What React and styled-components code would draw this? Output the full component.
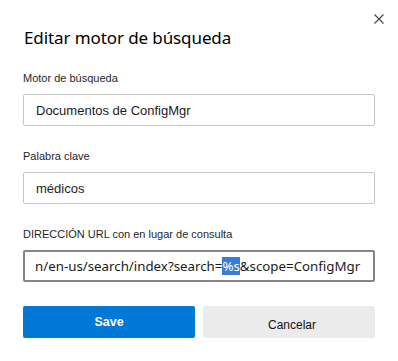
import styled, { createGlobalStyle } from 'styled-components';

const Global = createGlobalStyle`
  html, body {
    margin: 0;
    padding: 0;
    background: #fff;
  }
  body {
    font-family: 'Liberation Sans', Arial, sans-serif;
    color: #1b1b1b;
  }
`;

const Dialog = styled.div`
  position: relative;
  width: 398px;
  height: 361px;
  box-sizing: border-box;
  padding: 26px 23px 0 23px;
  display: flex;
  flex-direction: column;
  background: #fff;
`;

const Close = styled.button`
  position: absolute;
  top: 13px;
  right: 14px;
  width: 11px;
  height: 11px;
  padding: 0;
  border: 0;
  background: transparent;
  display: flex;
  align-items: center;
  justify-content: center;
  cursor: pointer;
`;

const Title = styled.h1`
  margin: 0 0 20px 1px;
  font-family: 'Noto Sans', 'Open Sans', sans-serif;
  font-weight: 400;
  font-size: 17px;
  line-height: 24px;
  color: #000;
  letter-spacing: -0.1px;
`;

const Field = styled.div`
  display: flex;
  flex-direction: column;
  margin-bottom: 22px;
`;

const Label = styled.label`
  font-size: 11px;
  line-height: 16px;
  color: #1f1f1f;
  margin-bottom: 8px;
`;

const Input = styled.div`
  box-sizing: border-box;
  height: 32px;
  display: flex;
  align-items: center;
  overflow: hidden;
  white-space: nowrap;
  border: ${(p) => (p.$focused ? '2px solid #858585' : '1px solid #c6c6c6')};
  border-radius: 2px;
  padding: ${(p) => (p.$focused ? '0 11px 1px 10px' : '1px 12px 0 12px')};
  font-family: ${(p) =>
    p.$focused ? "'Noto Sans', 'Open Sans', sans-serif" : "'Liberation Sans', Arial, sans-serif"};
  font-size: ${(p) => (p.$focused ? '13.3px' : '13px')};
  color: #1b1b1b;
`;

const Selected = styled.span`
  background: #3a7cd6;
  color: #fff;
  line-height: 18px;
  display: inline-block;
`;

const Actions = styled.div`
  display: grid;
  grid-template-columns: 1fr 1fr;
  gap: 8px;
  margin-top: 2px;
`;

const Button = styled.button`
  height: 32px;
  border: 0;
  border-radius: 2px;
  cursor: pointer;
  background: ${(p) => (p.$primary ? '#0078d4' : '#ebebeb')};
  color: ${(p) => (p.$primary ? '#fff' : '#111')};
  font-family: 'Liberation Sans', Arial, sans-serif;
  font-weight: ${(p) => (p.$primary ? 700 : 400)};
  font-size: ${(p) => (p.$primary ? '12.5px' : '12px')};
  padding: ${(p) => (p.$primary ? '0' : '5px 0 0 6px')};
`;

const CloseIcon = () => (
  <svg width="10" height="10" viewBox="0 0 10 10">
    <path d="M0.5 0.5 L9.5 9.5 M9.5 0.5 L0.5 9.5" stroke="#444" strokeWidth="1.1" fill="none" />
  </svg>
);

export default function App() {
  return (
    <>
      <Global />
      <Dialog>
        <Close aria-label="Cerrar">
          <CloseIcon />
        </Close>
        <Title>Editar motor de búsqueda</Title>
        <Field>
          <Label>Motor de búsqueda</Label>
          <Input>Documentos de ConfigMgr</Input>
        </Field>
        <Field>
          <Label>Palabra clave</Label>
          <Input>médicos</Input>
        </Field>
        <Field>
          <Label>DIRECCIÓN URL con en lugar de consulta</Label>
          <Input $focused>
            n/en-us/search/index?search=<Selected>%s</Selected>&amp;scope=ConfigMgr
          </Input>
        </Field>
        <Actions>
          <Button $primary>Save</Button>
          <Button>Cancelar</Button>
        </Actions>
      </Dialog>
    </>
  );
}
